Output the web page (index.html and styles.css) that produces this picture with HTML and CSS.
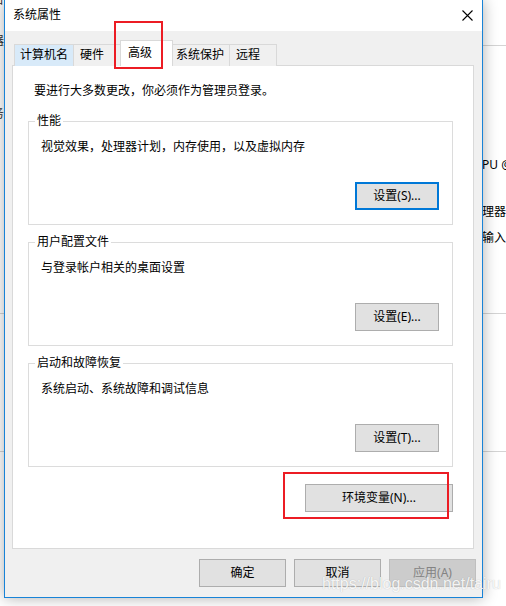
FILE: index.html
```html
<!DOCTYPE html>
<html lang="zh-CN">
<head>
<meta charset="utf-8">
<title>系统属性</title>
<link rel="stylesheet" href="styles.css">
</head>
<body>
<div class="backdrop">
  <div class="bg-line bg-line-1"></div>
  <div class="bg-line bg-line-2"></div>
  <div class="bg-line bg-line-3"></div>
  <span class="bg-text bg-pu">PU @</span>
  <span class="bg-text bg-cpu">处理器</span>
  <span class="bg-text bg-in">和输入</span>
  <span class="bg-left bg-left-1">古</span>
  <span class="bg-left bg-left-2">器</span>
  <span class="bg-left bg-left-3">务</span>
</div>

<div class="dialog">
  <div class="titlebar">
    <span class="title">系统属性</span>
    <svg class="close" width="11" height="11" viewBox="0 0 11 11"><path d="M0.5 0.5 L10.5 10.5 M10.5 0.5 L0.5 10.5" stroke="#000" stroke-width="1.1" fill="none"/></svg>
  </div>
  <div class="body">
    <div class="tabs">
      <div class="tab tab-name hover">计算机名</div>
      <div class="tab tab-hw">硬件</div>
      <div class="tab tab-adv selected">高级</div>
      <div class="tab tab-prot">系统保护</div>
      <div class="tab tab-rem">远程</div>
    </div>
    <div class="panel">
      <p class="intro">要进行大多数更改，你必须作为管理员登录。</p>
      <div class="group">
        <span class="legend">性能</span>
        <p class="desc">视觉效果，处理器计划，内存使用，以及虚拟内存</p>
        <button class="btn btn-set focus">设置(S)...</button>
      </div>
      <div class="group">
        <span class="legend">用户配置文件</span>
        <p class="desc">与登录帐户相关的桌面设置</p>
        <button class="btn btn-set">设置(E)...</button>
      </div>
      <div class="group">
        <span class="legend">启动和故障恢复</span>
        <p class="desc">系统启动、系统故障和调试信息</p>
        <button class="btn btn-set">设置(T)...</button>
      </div>
      <button class="btn btn-env">环境变量(N)...</button>
    </div>
    <div class="actions">
      <button class="btn btn-act">确定</button>
      <button class="btn btn-act">取消</button>
      <button class="btn btn-act disabled">应用(A)</button>
    </div>
  </div>
</div>

<div class="mark mark-tab"></div>
<div class="mark mark-env"></div>
<div class="watermark">https://blog.csdn.net/tairu</div>
</body>
</html>
```

FILE: styles.css
```css
* { box-sizing: border-box; }

html, body {
  margin: 0;
  padding: 0;
}

body {
  position: relative;
  width: 506px;
  height: 606px;
  overflow: hidden;
  background: #ffffff;
  font-family: "Noto Sans", "Noto Sans CJK SC", sans-serif;
  font-size: 12px;
  line-height: 16px;
  color: #000;
}

p { margin: 0; }

/* ---------- background window (behind the dialog) ---------- */
.backdrop {
  position: absolute;
  inset: 0;
  z-index: 0;
}
.bg-line {
  position: absolute;
  left: 0;
  right: 0;
  height: 1px;
  background: #d4d4d4;
}
.bg-line-1 { top: 45px; }
.bg-line-2 { top: 313px; }
.bg-line-3 { top: 451px; }

.bg-text {
  position: absolute;
  font-family: "Noto Sans", "Noto Sans CJK SC", sans-serif;
  font-size: 12px;
  color: #000;
  white-space: nowrap;
}
.bg-pu { left: 482px; top: 157px; }
.bg-cpu { left: 470px; top: 204px; }
.bg-in { left: 470px; top: 230px; }

.bg-left {
  position: absolute;
  left: -8px;
  font-size: 12px;
  color: #333;
}
.bg-left-1 { top: -8px; }
.bg-left-2 { top: 33px; }
.bg-left-3 { top: 106px; }

/* ---------- dialog ---------- */
.dialog {
  position: relative;
  z-index: 1;
  margin-left: 4px;
  width: 479px;
  border: 1px solid #1883d7;
  border-top: none;
  background: #f0f0f0;
  box-shadow: 0 0 14px rgba(0, 0, 0, 0.32);
}

.titlebar {
  height: 31px;
  background: #ffffff;
  display: flex;
  align-items: center;
  justify-content: space-between;
  padding: 0 9px 0 8px;
}
.title {
  font-size: 12px;
  line-height: 16px;
  margin-top: -1px;
}
.close {
  display: block;
  margin-top: -1px;
}

.body {
  padding: 9px 6px 10px 7px;
}

/* ---------- tabs ---------- */
.tabs {
  display: flex;
  align-items: flex-end;
  height: 26px;
  margin-left: 2px;
  position: relative;
  z-index: 1;
}
.tab {
  height: 22px;
  border: 1px solid #d9d9d9;
  border-bottom: none;
  background: #f0f0f0;
  margin-left: -1px;
  line-height: 20px;
  white-space: nowrap;
}
.tab:first-child { margin-left: 0; }
.tab.hover { background: #d8eaf9; }
.tab.selected {
  height: 26px;
  background: #ffffff;
  line-height: 23px;
  position: relative;
  z-index: 2;
}
.tab-name { width: 60px; padding-left: 5px; }
.tab-hw { width: 48px; padding-left: 6px; }
.tab-adv { width: 53px; padding-left: 7px; }
.tab-prot { width: 58px; padding-left: 3px; }
.tab-rem { width: 48px; padding-left: 6px; }

/* ---------- tab panel ---------- */
.panel {
  position: relative;
  z-index: 0;
  margin-top: -1px;
  margin-right: 2px;
  height: 484px;
  background: #ffffff;
  border: 1px solid #d9d9d9;
  padding: 17px 20px 0 15px;
  display: flex;
  flex-direction: column;
}
.intro {
  padding-left: 6px;
  margin-bottom: 22px;
}

.group {
  position: relative;
  height: 104px;
  border: 1px solid #dcdcdc;
  padding: 17px 13px 14px 12px;
  display: flex;
  flex-direction: column;
  margin-bottom: 17px;
}
.legend {
  position: absolute;
  top: -9px;
  left: 6px;
  padding: 0 2px;
  background: #ffffff;
  line-height: 16px;
}
.desc { line-height: 16px; }

/* ---------- buttons ---------- */
.btn {
  font-family: "Noto Sans", "Noto Sans CJK SC", sans-serif;
  font-size: 12px;
  line-height: 16px;
  color: #000;
  background: #e1e1e1;
  border: 1px solid #adadad;
  padding: 0;
  height: 28px;
  margin: 0;
}
.btn-set {
  width: 84px;
  margin-top: auto;
  align-self: flex-end;
}
.btn.focus {
  border: 2px solid #0078d7;
}
.btn-env {
  width: 148px;
  align-self: flex-end;
  margin-right: 0;
}

.actions {
  display: flex;
  justify-content: flex-end;
  gap: 8px;
  margin-top: 10px;
}
.btn-act { width: 87px; }
.btn.disabled {
  background: #cccccc;
  border-color: #bfbfbf;
  color: #838383;
}

/* ---------- annotation overlays ---------- */
.mark {
  position: absolute;
  z-index: 5;
  border: 2px solid #ec1c24;
}
.mark-tab { left: 114px; top: 21px; width: 49px; height: 48px; }
.mark-env { left: 283px; top: 472px; width: 166px; height: 47px; }

.watermark {
  position: absolute;
  z-index: 6;
  left: 322px;
  top: 574px;
  font-family: "Liberation Sans", Arial, sans-serif;
  font-size: 16px;
  line-height: 20px;
  color: rgba(255, 255, 255, 0.9);
  text-shadow: 0 0 1px rgba(0, 0, 0, 0.25);
  white-space: nowrap;
}
```
